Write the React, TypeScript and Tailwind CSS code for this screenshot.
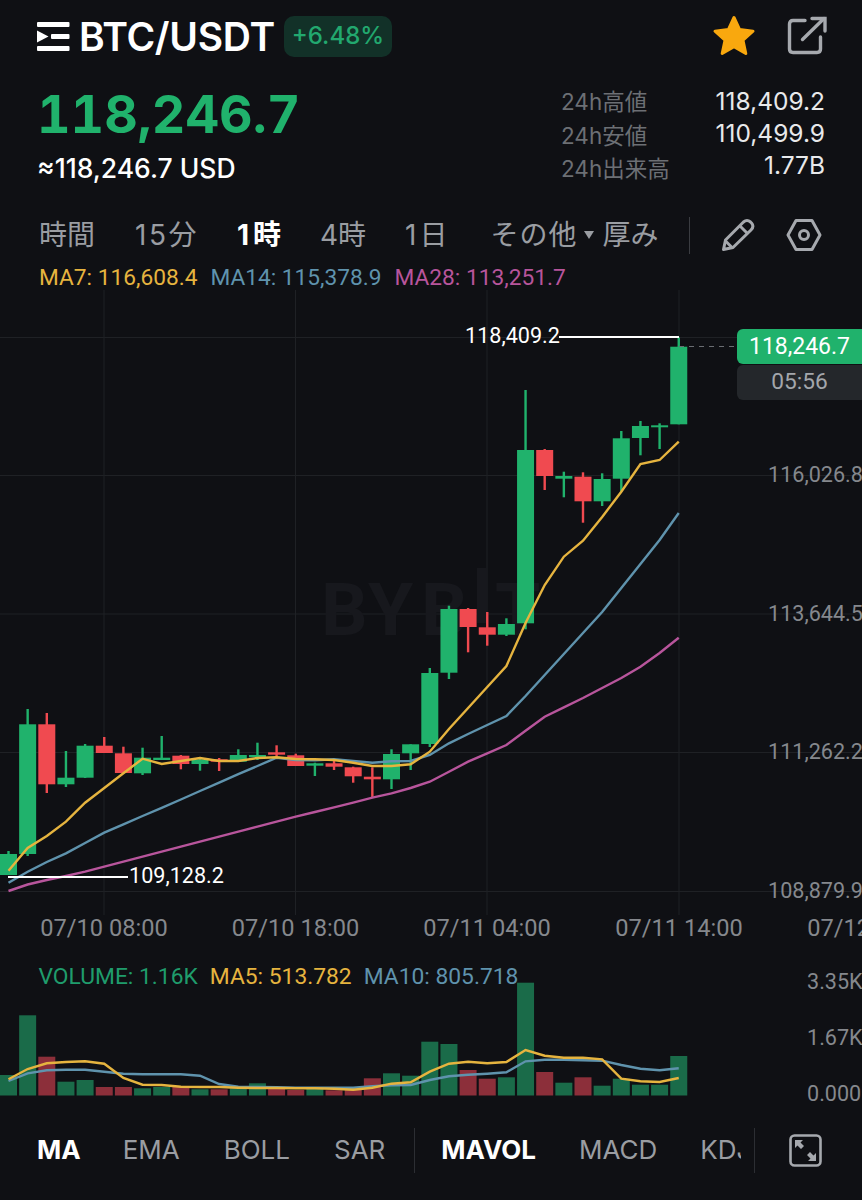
const GREEN = "#20b26c";
const RED = "#f04a50";
const VOL_GREEN = "#1a6b49";
const VOL_RED = "#8c2f3a";
const YELLOW = "#e6b43f";
const BLUE = "#5f93ad";
const PINK = "#b8559c";
const AXIS = "#85888d";

const xAt = (i: number) => 8.5 + 19.15 * i;

// bodyTop, bodyBottom, wickTop, wickBottom, up
type Candle = [number, number, number, number, boolean];

const candles: Candle[] = [
  [854, 875, 851, 875, true],
  [724.3, 854, 709, 856, true],
  [724.3, 784.3, 713, 793, false],
  [777.7, 784.3, 751, 787, true],
  [745.7, 777.7, 744, 778, true],
  [745.7, 753, 737, 753, false],
  [753.3, 773, 746.7, 773, false],
  [757.7, 773.3, 747.7, 775, true],
  [757.7, 760, 736, 760, true],
  [755.7, 764, 755, 769.3, false],
  [759.3, 764, 758.5, 770.7, true],
  [759.3, 761.7, 758, 771, false],
  [755, 761.7, 749.3, 761.7, true],
  [755, 757.3, 742.7, 760, true],
  [752.3, 754.7, 745.3, 757, false],
  [755.3, 766, 753.7, 766, false],
  [763.3, 765.7, 762.7, 776, true],
  [763.3, 766.7, 759, 770, false],
  [767.3, 776.3, 766.7, 782.7, false],
  [776.7, 779.3, 767.3, 797.3, false],
  [754, 779.3, 749.3, 789, true],
  [744.3, 753.3, 744.3, 770, true],
  [673, 744, 668, 747, true],
  [609, 672.7, 605.7, 679, true],
  [609, 627, 608, 652.3, false],
  [627.3, 634.7, 612, 645.7, false],
  [624, 634.7, 618.3, 636, true],
  [450, 623.3, 390, 629.3, true],
  [450, 476, 449, 490, false],
  [476, 478.7, 471.7, 497.3, true],
  [476.7, 501.3, 472.3, 522.7, false],
  [479, 501.3, 473.3, 506, true],
  [438.3, 478.7, 431, 491.7, true],
  [426, 438, 421, 455.3, true],
  [425.3, 427.3, 423.3, 449, true],
  [346.7, 424.3, 337.3, 424.3, true],
];

const ma7 = [
  870.7, 848, 836, 821.7, 802.7, 788, 773.3, 758.7, 764, 761, 758, 761, 761, 758, 757.3, 759, 759.3, 760, 762.7,
  766, 766, 764.3, 751.7, 729, 708, 687, 666, 623, 585, 556.7, 540.7, 517, 491.7, 464, 460, 441.7,
];
const ma14 = [
  882.7, 871.7, 862, 853.3, 843, 832.7, 824.4, 816, 807.8, 799.5, 791, 782.6, 774.2, 766, 757.7, 760, 760.3, 759.3,
  761, 762.7, 761.3, 761, 755, 743.3, 734, 725, 716, 696, 675, 654, 633, 612, 588, 564, 540, 513,
];
const ma28 = [
  891, 884.5, 880, 876, 871.7, 866.7, 861.7, 856.7, 851.7, 846.7, 841.7, 836.7, 831.7, 826.7, 821.7, 816.7, 812,
  807.3, 802.6, 797.7, 793.3, 788, 781.7, 771.7, 761.7, 753.3, 745, 730.7, 716.7, 707.3, 698, 688, 678, 666.7, 653,
  637.7,
];

const volTops = [
  1075, 1015.3, 1056.7, 1081.7, 1080, 1087, 1087, 1088.3, 1087, 1087, 1089.3, 1089.3, 1088.3, 1083.3, 1088.3, 1090,
  1088.7, 1090.3, 1089.7, 1078.3, 1073.3, 1075.7, 1041.7, 1044, 1070, 1078.7, 1077.3, 982.7, 1072, 1082.7, 1077.3,
  1085.7, 1078.7, 1084.7, 1084.7, 1056,
];
const volMa5 = [
  1079.3, 1069, 1063.3, 1062, 1061.3, 1063.7, 1078, 1084.7, 1085, 1086.7, 1087, 1087, 1087.7, 1088, 1088, 1088.3,
  1088.3, 1088.7, 1089.7, 1087.7, 1083.7, 1082.3, 1071.7, 1063.7, 1061.7, 1063.3, 1062, 1050, 1055.7, 1057.7, 1057.7,
  1059.3, 1078.7, 1081.3, 1082, 1078,
];
const volMa10 = [
  1081, 1073.3, 1070.3, 1069.7, 1069.7, 1071.7, 1073.7, 1074.3, 1074.3, 1074.3, 1075.7, 1084, 1086.7, 1087, 1087.3,
  1087.7, 1087.7, 1087.7, 1087.7, 1086.3, 1085.3, 1085, 1080, 1076.3, 1074.7, 1073.7, 1072.3, 1061.3, 1059.7, 1059.7,
  1060.3, 1060.7, 1065, 1068.7, 1070.3, 1068.3,
];

const toPoints = (ys: number[]) => ys.map((y, i) => `${xAt(i)},${y}`).join(" ");

function Logo() {
  return (
    <svg width="33" height="31" viewBox="0 0 33 31" fill="#fff">
      <rect x="0" y="1" width="32.5" height="5" rx="1" />
      <rect x="0" y="25" width="32.5" height="5" rx="1" />
      <rect x="14" y="13" width="18.5" height="5" rx="1" />
      <path d="M0 9.5 L11.5 15.5 L0 21.5 Z" />
    </svg>
  );
}

function Star() {
  return (
    <svg width="44" height="42" viewBox="0 0 44 42">
      <path
        d="M22 2.5 L27.6 14.6 L41 16.2 L31 25.2 L33.8 38.5 L22 31.8 L10.2 38.5 L13 25.2 L3 16.2 L16.4 14.6 Z"
        fill="#f9a80e"
        stroke="#f9a80e"
        strokeWidth="3"
        strokeLinejoin="round"
      />
    </svg>
  );
}

function ShareIcon() {
  return (
    <svg width="40" height="40" viewBox="0 0 40 40" fill="none" stroke="#a6a9ae" strokeWidth="3.4" strokeLinecap="round">
      <path d="M18 4.5 H6 Q2.5 4.5 2.5 8 V33 Q2.5 36.5 6 36.5 H30 Q33.5 36.5 33.5 33 V21" />
      <path d="M15.5 23.5 L37 2.5" />
      <path d="M25 2.5 H38 V15" />
    </svg>
  );
}

function PencilIcon() {
  return (
    <svg width="34" height="34" viewBox="0 0 34 34" fill="none" stroke="#a6a9ae" strokeWidth="3" strokeLinejoin="round">
      <path d="M2.5 31.5 L4.5 22 L22.5 4 Q26 1 29.5 4 L30.5 5 Q33.5 8.5 30 12 L12 29.5 Z" />
      <path d="M19 8 L26.5 15.5" />
      <path d="M4.5 23 L11 29.5" />
    </svg>
  );
}

function HexIcon() {
  return (
    <svg width="36" height="34" viewBox="0 0 36 34" fill="none" stroke="#a6a9ae" strokeWidth="3">
      <path d="M10 2.5 H26 L34 17 L26 31.5 H10 L2 17 Z" strokeLinejoin="round" />
      <circle cx="18" cy="17" r="4.5" />
    </svg>
  );
}

function ExpandIcon() {
  return (
    <svg width="33" height="33" viewBox="0 0 33 33" fill="none">
      <rect x="1.5" y="1.5" width="30" height="30" rx="4" stroke="#a6a9ae" strokeWidth="2.6" />
      <path d="M6 6 H14 L11.5 8.5 L15 12 L12 15 L8.5 11.5 L6 14 Z" fill="#a6a9ae" />
      <path d="M27 27 H19 L21.5 24.5 L18 21 L21 18 L24.5 21.5 L27 19 Z" fill="#a6a9ae" />
    </svg>
  );
}

function PriceChart() {
  return (
    <div className="relative h-[657px]">
      <svg width="862" height="657" viewBox="0 288 862 657" className="block font-['Roboto',sans-serif]">
        {[337.5, 475.5, 614, 752.5, 891.5].map((y) => (
          <line key={y} x1="0" x2="862" y1={y} y2={y} stroke="#1f2125" strokeWidth="1" />
        ))}
        {[104, 295.5, 487, 679].map((x) => (
          <line key={x} x1={x} x2={x} y1="290" y2="915" stroke="#1f2125" strokeWidth="1" />
        ))}

        <text x="321 368 421" y="635" fontSize="73" fontWeight="700" fill="#17181d">
          BYB
        </text>
        <rect x="477" y="568" width="10" height="55" fill="#17181d" />
        <text x="495" y="635" fontSize="73" fontWeight="700" fill="#17181d">
          T
        </text>

        {candles.map(([top, bottom, wickTop, wickBottom, up], i) => {
          const x = xAt(i);
          const color = up ? GREEN : RED;
          return (
            <g key={i} fill={color}>
              <rect x={x - 1.2} y={wickTop} width="2.4" height={wickBottom - wickTop} />
              <rect x={x - 8.5} y={top} width="17" height={bottom - top} />
            </g>
          );
        })}

        <polyline points={toPoints(ma28)} fill="none" stroke={PINK} strokeWidth="2.4" />
        <polyline points={toPoints(ma14)} fill="none" stroke={BLUE} strokeWidth="2.4" />
        <polyline points={toPoints(ma7)} fill="none" stroke={YELLOW} strokeWidth="2.4" />

        <line x1="679" x2="737" y1="346.5" y2="346.5" stroke="#6a6d72" strokeWidth="1" strokeDasharray="5 5" />

        <line x1="559" x2="679" y1="337" y2="337" stroke="#fff" strokeWidth="2" />
        <text x="465" y="343" fontSize="21.6" fill="#fff">
          118,409.2
        </text>
        <line x1="8" x2="128" y1="877" y2="877" stroke="#fff" strokeWidth="2" />
        <text x="129" y="883" fontSize="21.6" fill="#fff">
          109,128.2
        </text>

        {[
          ["118,409.2", 345],
          ["116,026.8", 482],
          ["113,644.5", 620.5],
          ["111,262.2", 759],
          ["108,879.9", 898],
        ].map(([label, y]) => (
          <text key={label} x="768" y={y} fontSize="21.6" fill={AXIS}>
            {label}
          </text>
        ))}

        {[
          ["07/10 08:00", 104],
          ["07/10 18:00", 295.5],
          ["07/11 04:00", 487],
          ["07/11 14:00", 679],
          ["07/12 00:00", 871],
        ].map(([label, x]) => (
          <text key={label} x={x} y="936" fontSize="23.6" fill={AXIS} textAnchor="middle">
            {label}
          </text>
        ))}
      </svg>

      <div className="absolute right-0 top-[41px] w-[125px] font-['Roboto',sans-serif] text-[23px] leading-none">
        <div className="flex h-[35px] items-center justify-center rounded-l-md bg-[#20b26c] text-white">118,246.7</div>
        <div className="mt-px flex h-[35px] items-center justify-center rounded-l-md bg-[#24272b] text-[22.7px] text-[#a3a6ab]">
          05:56
        </div>
      </div>
    </div>
  );
}

function VolumeChart() {
  return (
    <div className="relative h-[160px]">
      <svg width="862" height="160" viewBox="0 945 862 160" className="block font-['Roboto',sans-serif]">
        {volTops.map((top, i) => (
          <rect
            key={i}
            x={xAt(i) - 8.5}
            y={top}
            width="17"
            height={1095.5 - top}
            fill={candles[i][4] ? VOL_GREEN : VOL_RED}
          />
        ))}
        <polyline points={toPoints(volMa10)} fill="none" stroke={BLUE} strokeWidth="2.4" />
        <polyline points={toPoints(volMa5)} fill="none" stroke={YELLOW} strokeWidth="2.4" />
        {[
          ["3.35K", 989],
          ["1.67K", 1045],
          ["0.000", 1101],
        ].map(([label, y]) => (
          <text key={label} x="807" y={y} fontSize="21.6" fill={AXIS}>
            {label}
          </text>
        ))}
      </svg>
      <div className="absolute left-[38.5px] top-[21px] flex gap-[12px] font-['Roboto',sans-serif] text-[22.8px] leading-[22px]">
        <span className="text-[#1f9c6c]">VOLUME: 1.16K</span>
        <span className="text-[#e6b43f]">MA5: 513.782</span>
        <span className="text-[#5f93ad]">MA10: 805.718</span>
      </div>
    </div>
  );
}

export default function App() {
  return (
    <div className="h-[1200px] w-[862px] overflow-hidden bg-[#0f1014] font-['Inter','Noto_Sans_CJK_JP',sans-serif]">
      <header className="flex h-[72px] items-center pl-[37px] pr-[35px]">
        <Logo />
        <h1 className="ml-[9px] text-[39px] font-semibold leading-none tracking-[-0.3px] text-white">BTC/USDT</h1>
        <span className="ml-[9px] flex h-[41px] w-[108px] items-center justify-center rounded-[10px] bg-[#123128] text-[24px] font-medium text-[#22a86f]">
          +6.48%
        </span>
        <div className="ml-auto flex items-center gap-[31px]">
          <Star />
          <ShareIcon />
        </div>
      </header>

      <section className="flex h-[130px] justify-between pl-[37px] pr-[37px]">
        <div>
          <div className="mt-[12px] text-[52px] font-bold leading-[62px] tabular-nums text-[#20b26c]">118,246.7</div>
          <div className="mt-[7px] text-[26.5px] font-medium leading-[30px] text-white">≈118,246.7 USD</div>
        </div>
        <div className="mt-[13px] flex w-[264px] justify-between">
          <div className="text-[22.5px] leading-[33.5px] text-[#6c6f74]">
            <div>24h高値</div>
            <div>24h安値</div>
            <div>24h出来高</div>
          </div>
          <div className="text-right text-[24.5px] leading-[32px] text-[#e8e9eb]">
            <div>118,409.2</div>
            <div>110,499.9</div>
            <div>1.77B</div>
          </div>
        </div>
      </section>

      <nav className="flex h-[66px] items-center pl-[39px] text-[28px] text-[#9a9da2]">
        <span>時間</span>
        <span className="ml-[40px] tracking-[2.5px]">15分</span>
        <span className="ml-[38px] font-bold tracking-[4px] text-white">1時</span>
        <span className="ml-[35px]">4時</span>
        <span className="ml-[39px] tracking-[3px]">1日</span>
        <span className="ml-[40px] tracking-[1px]">その他</span>
        <span className="ml-[6px] h-0 w-0 border-x-[5px] border-t-[8px] border-x-transparent border-t-[#9a9da2]" />
        <span className="ml-[9px]">厚み</span>
        <span className="ml-[30px] h-[37px] w-px bg-[#3a3c41]" />
        <span className="ml-[31px] flex items-center">
          <PencilIcon />
        </span>
        <span className="ml-[31px] flex items-center">
          <HexIcon />
        </span>
      </nav>

      <div className="flex h-[20px] items-center gap-[13px] pl-[39px] font-['Roboto',sans-serif] text-[22.7px] leading-none">
        <span className="text-[#e6b43f]">MA7: 116,608.4</span>
        <span className="text-[#5f93ad]">MA14: 115,378.9</span>
        <span className="text-[#b8559c]">MA28: 113,251.7</span>
      </div>

      <PriceChart />
      <VolumeChart />

      <nav className="flex h-[90px] items-center pl-[37px] text-[26px] leading-none text-[#9a9da2]">
        <span className="font-bold text-white">MA</span>
        <span className="ml-[42px]">EMA</span>
        <span className="ml-[44px]">BOLL</span>
        <span className="ml-[44px]">SAR</span>
        <span className="ml-[29px] h-[45px] w-px bg-[#2c2e33]" />
        <span className="ml-[26px] font-bold text-white">MAVOL</span>
        <span className="ml-[43px]">MACD</span>
        <span className="ml-[43px] w-[41px] overflow-hidden whitespace-nowrap">KDJ</span>
        <span className="ml-[13px] h-[45px] w-px bg-[#2c2e33]" />
        <span className="ml-[34px] flex items-center">
          <ExpandIcon />
        </span>
      </nav>
    </div>
  );
}
